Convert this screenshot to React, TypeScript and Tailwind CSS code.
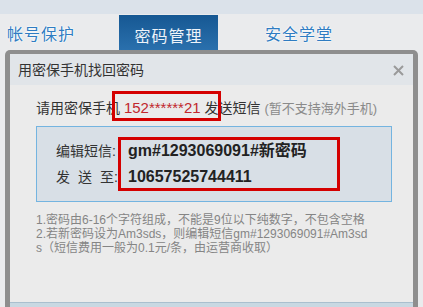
import React from 'react';

const font = 'font-["Liberation_Sans","Noto_Sans_CJK_SC",sans-serif]';

function SideTab({ label, className = '' }: { label: string; className?: string }) {
  return (
    <div
      className={`flex items-center pt-[6px] text-[16px] leading-[20px] tracking-[1px] text-[#2f7cc2] [text-shadow:0_0_2px_#fff,0_0_2px_#fff,0_0_1px_#fff] ${className}`}
    >
      {label}
    </div>
  );
}

export default function App() {
  return (
    <div className={`relative w-[423px] h-[307px] overflow-hidden bg-[#eaebed] ${font}`}>
      <div className="h-[14px] bg-[#dbe2ea]" />

      {/* tabs */}
      <div className="flex h-[36px]">
        <SideTab label="帐号保护" className="w-[119px] pl-[7px]" />
        <div className="mt-[1px] w-[99px] flex justify-center pt-[12px] bg-gradient-to-b from-[#165893] to-[#2a70ad] text-[16px] leading-[20px] tracking-[1px] text-[#eef3f9]">
          密码管理
        </div>
        <SideTab label="安全学堂" className="ml-[47px]" />
      </div>

      {/* dialog */}
      <div className="mx-[5px] h-[260px] border-x-[5px] border-t-4 border-[#8e8e8e] rounded-t-[5px] bg-[#ebebeb] flex flex-col">
        <div className="h-[31px] shrink-0 bg-[#e1e5e9] flex items-center justify-between pl-[8px] pr-[9px]">
          <span className="text-[14px] leading-[18px] text-[#333]">用密保手机找回密码</span>
          <svg width="11" height="11" viewBox="0 0 11 11" className="mt-[1px]">
            <path d="M1 1 L10 10 M10 1 L1 10" stroke="#9a9a9a" strokeWidth="2" />
          </svg>
        </div>

        <div className="flex-1 pl-[26px] pr-[21px]">
          <div className="pt-[14px] h-[41px] text-[14px] leading-[18px] text-[#333] whitespace-nowrap">
            请用密保手机 <span className="text-[15px] text-[#c1272d]">152******21</span> 发送短信
            <span className="ml-[4px] text-[13px] text-[#8a8a8a]">(暂不支持海外手机)</span>
          </div>

          <div className="h-[76px] border border-[#74b4e0] bg-[#d8dfe6] pt-[11px] pl-[19px] text-[14px] leading-[26px] text-[#333]">
            <div className="flex whitespace-nowrap">
              <span className="w-[72px]">编辑短信:</span>
              <span className="font-bold text-[16px] text-[#222]">gm#1293069091#新密码</span>
            </div>
            <div className="flex whitespace-nowrap">
              <span className="w-[72px]">
                发<span className="ml-[8px]">送</span>
                <span className="ml-[8px]">至</span>:
              </span>
              <span className="font-bold text-[16px] text-[#222]">10657525744411</span>
            </div>
          </div>

          <div className="mt-[11px] text-[12px] leading-[14px] text-[#858585] whitespace-nowrap">
            <div>1.密码由6-16个字符组成，不能是9位以下纯数字，不包含空格</div>
            <div>2.若新密码设为Am3sds，则编辑短信gm#1293069091#Am3sd</div>
            <div>s（短信费用一般为0.1元/条，由运营商收取）</div>
          </div>
        </div>

        <div className="h-[8px] shrink-0 border-t border-[#a9bfce] bg-[#c8d8e2]" />
      </div>

      {/* red annotation boxes */}
      <div className="absolute left-[112px] top-[91px] w-[109px] h-[30px] border-[3px] border-[#d40000]" />
      <div className="absolute left-[118px] top-[137px] w-[222px] h-[54px] border-[3px] border-[#d40000]" />
    </div>
  );
}
